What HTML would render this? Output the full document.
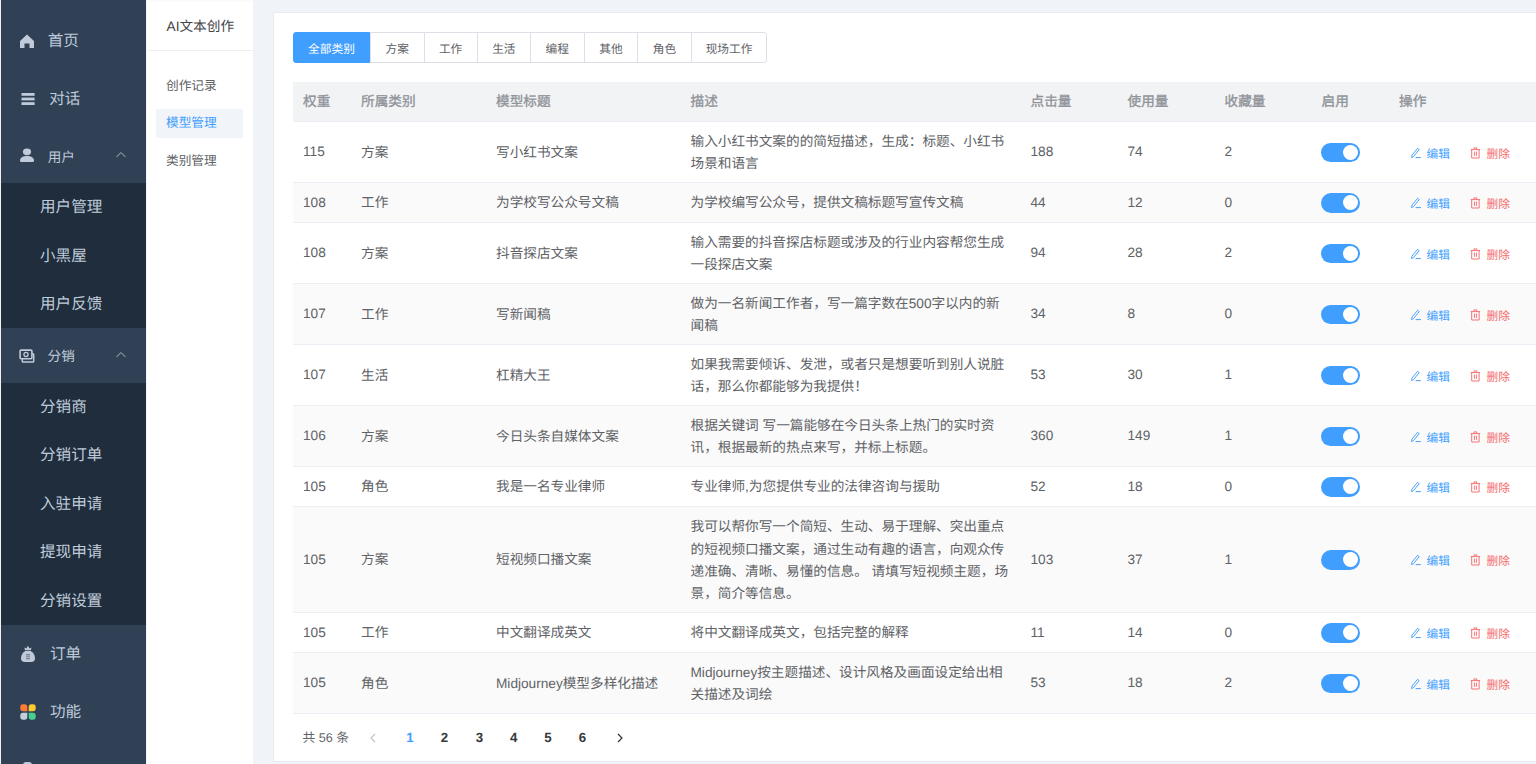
<!DOCTYPE html><html lang="zh-CN"><head><meta charset="utf-8"><style>
*{margin:0;padding:0;box-sizing:border-box}
html,body{width:1536px;height:764px;overflow:hidden;background:#f0f3f7;font-family:"Liberation Sans",sans-serif;color:#606266;text-rendering:geometricPrecision}
.t{position:absolute;white-space:nowrap;line-height:20px;height:20px}
#sb{position:absolute;left:0;top:0;width:146.3px;height:764px;background:#304156;border-left:1px solid #f1f0ee}
.sub{position:absolute;left:0;width:145.3px;background:#1f2d3d}
.mi{position:absolute;color:#bfcbd9;white-space:nowrap;line-height:20px;height:20px;font-size:15.6px}
.ic{position:absolute}
#p2{position:absolute;left:146.5px;top:0;width:106.5px;height:764px;background:#fff}
#card{position:absolute;left:272.5px;top:12px;width:1300px;height:750px;background:#fff;border:1px solid #e9ebee}
.btn{position:absolute;top:32px;height:30.5px;border:1px solid #dcdfe6;background:#fff;color:#606266;font-size:11.7px;line-height:28.5px;padding-top:2.5px;text-align:center;white-space:nowrap}
.row{position:absolute;left:293px;width:1300px;border-bottom:1px solid #ebeef5;background:#fff}
.row.s{background:#fafafa}
.c{position:absolute;top:0;bottom:1px;display:flex;align-items:center;white-space:nowrap;font-size:13.65px;line-height:22.3px}
.hd{background:#f2f3f5;color:#909399}
.hd .c{-webkit-text-stroke:0.35px #909399}
.sw{position:absolute;width:39px;height:19.6px;border-radius:10px;background:#409eff;top:50%;margin-top:-9.5px}
.sw::after{content:"";position:absolute;right:1.9px;top:2.2px;width:15.3px;height:15.3px;border-radius:50%;background:#fff}
.op{position:absolute;font-size:11.7px;white-space:nowrap;line-height:14px;height:14px;top:50%;margin-top:-6.5px}
.op span{position:relative;top:2px}
</style></head><body>
<div id="sb">
<div class="sub" style="top:182.5px;height:145.5px"></div>
<div class="sub" style="top:382.5px;height:242.5px"></div>
<div class="mi" style="left:46.7px;top:31.5px;font-size:15.6px">首页</div>
<div class="mi" style="left:48.2px;top:89.5px;font-size:15.6px">对话</div>
<div class="mi" style="left:46.7px;top:147.7px;font-size:13.65px">用户</div>
<div class="mi" style="left:39px;top:197.5px;font-size:15.6px">用户管理</div>
<div class="mi" style="left:39px;top:246.5px;font-size:15.6px">小黑屋</div>
<div class="mi" style="left:39px;top:294.7px;font-size:15.6px">用户反馈</div>
<div class="mi" style="left:46.6px;top:347px;font-size:13.65px">分销</div>
<div class="mi" style="left:39px;top:397.5px;font-size:15.6px">分销商</div>
<div class="mi" style="left:39px;top:446px;font-size:15.6px">分销订单</div>
<div class="mi" style="left:39px;top:494.5px;font-size:15.6px">入驻申请</div>
<div class="mi" style="left:39px;top:543px;font-size:15.6px">提现申请</div>
<div class="mi" style="left:39px;top:592px;font-size:15.6px">分销设置</div>
<div class="mi" style="left:49px;top:644.5px;font-size:15.6px">订单</div>
<div class="mi" style="left:49px;top:703px;font-size:15.6px">功能</div>
<svg class="ic" style="left:18px;top:32.7px" width="16" height="16" viewBox="0 0 16 16"><path d="M8 1.5 L15 8 V15 H10.5 V10.5 H5.5 V15 H1 V8 Z" fill="#c0cad8"/></svg>
<svg class="ic" style="left:20px;top:92px" width="14" height="14" viewBox="0 0 14 14"><rect x="0.5" y="1" width="13.1" height="2.8" fill="#c0cad8"/><rect x="0.5" y="5.6" width="13.1" height="2.8" fill="#c0cad8"/><rect x="0.5" y="10.2" width="13.1" height="2.8" fill="#c0cad8"/></svg>
<svg class="ic" style="left:18px;top:146px" width="16" height="18" viewBox="0 0 16 18"><ellipse cx="8" cy="5.8" rx="4.1" ry="3.4" fill="#c0cad8"/><path d="M1 14.6 C1 11.4 4.5 10.1 8 10.1 C11.5 10.1 15 11.4 15 14.6 C15 15.7 14.4 16.1 13.3 16.1 H2.7 C1.6 16.1 1 15.7 1 14.6 Z" fill="#c0cad8"/></svg>
<svg class="ic" style="left:114px;top:150.5px" width="12" height="8" viewBox="0 0 12 8"><path d="M1.5 6 L6 1.5 L10.5 6" fill="none" stroke="#7b8796" stroke-width="1.1"/></svg>
<svg class="ic" style="left:114px;top:350.5px" width="12" height="8" viewBox="0 0 12 8"><path d="M1.5 6 L6 1.5 L10.5 6" fill="none" stroke="#7b8796" stroke-width="1.1"/></svg>
<svg class="ic" style="left:17px;top:347px" width="18" height="17" viewBox="0 0 18 17"><rect x="4.3" y="6.8" width="11.4" height="8.3" rx="0.8" fill="#304156" stroke="#c0cad8" stroke-width="1.5"/><rect x="2.1" y="3.1" width="11.8" height="8.7" rx="1" fill="#304156" stroke="#c0cad8" stroke-width="1.6"/><circle cx="8" cy="7.5" r="2.05" fill="none" stroke="#c0cad8" stroke-width="1.3"/></svg>
<svg class="ic" style="left:20px;top:645px" width="15" height="18" viewBox="0 0 15 18"><path d="M4 5.3 L3.3 2.6 L5.3 3.4 L6.9 0.8 L8.5 3.4 L10.5 2.6 L9.8 5.3 Z" fill="#c0cad8"/><path d="M4.4 6.1 H9.6 C12.3 7.6 14 10.2 14 13.3 C14 16 12.6 17 10.3 17 H3.7 C1.4 17 0 16 0 13.3 C0 10.2 1.7 7.6 4.4 6.1 Z" fill="#c0cad8"/><rect x="5" y="9" width="4" height="5.3" fill="#304156" opacity="0.5"/><path d="M5 10.8 H9 M5 12.5 H9" stroke="#c0cad8" stroke-width="0.7"/></svg>
<svg class="ic" style="left:18.7px;top:704.3px" width="16" height="16" viewBox="0 0 16 16"><path d="M7.3 7.3 H3 A2.7 2.7 0 0 1 0.3 4.6 V3 A2.7 2.7 0 0 1 3 0.3 H4.6 A2.7 2.7 0 0 1 7.3 3 Z" fill="#fe7b35"/><path d="M8.7 7.3 H13 A2.7 2.7 0 0 0 15.7 4.6 V3 A2.7 2.7 0 0 0 13 0.3 H11.4 A2.7 2.7 0 0 0 8.7 3 Z" fill="#fdcb30"/><path d="M7.3 8.7 H3 A2.7 2.7 0 0 0 0.3 11.4 V13 A2.7 2.7 0 0 0 3 15.7 H4.6 A2.7 2.7 0 0 0 7.3 13 Z" fill="#c5cfdc"/><path d="M8.7 8.7 H13 A2.7 2.7 0 0 1 15.7 11.4 V13 A2.7 2.7 0 0 1 13 15.7 H11.4 A2.7 2.7 0 0 1 8.7 13 Z" fill="#45d08f"/></svg>
<div style="position:absolute;left:21.5px;top:761.5px;width:9.5px;height:3px;background:#c0cad8;border-radius:3px 3px 0 0"></div>
</div>
<div id="p2">
<div style="position:absolute;left:0;top:0;width:106.5px;height:1.5px;background:#fbfbfb"></div>
<div class="t" style="left:20.099999999999994px;top:16.5px;font-size:13.65px;color:#434448">AI文本创作</div>
<div style="position:absolute;left:1.5px;top:49.5px;width:105px;height:1.4px;background:#efefef"></div>
<div class="t" style="left:19.5px;top:76px;font-size:12.7px;color:#606266">创作记录</div>
<div style="position:absolute;left:9.5px;top:109px;width:87.3px;height:29px;background:#f1f4f8"></div>
<div class="t" style="left:19.5px;top:112.7px;font-size:12.7px;color:#409eff">模型管理</div>
<div class="t" style="left:19.5px;top:151px;font-size:12.7px;color:#606266">类别管理</div>
</div>
<div id="card"></div>
<div class="btn" style="left:293px;width:77px;background:#409eff;border-color:#409eff;color:#fff;border-radius:3px 0 0 3px">全部类别</div>
<div class="btn" style="left:370px;width:54.5px">方案</div>
<div class="btn" style="left:423.5px;width:54.19999999999999px">工作</div>
<div class="btn" style="left:476.7px;width:54.30000000000001px">生活</div>
<div class="btn" style="left:530px;width:54.60000000000002px">编程</div>
<div class="btn" style="left:583.6px;width:54.69999999999993px">其他</div>
<div class="btn" style="left:637.3px;width:54.40000000000009px">角色</div>
<div class="btn" style="left:690.7px;width:76.69999999999993px;border-radius:0 3px 3px 0">现场工作</div>
<div class="row hd" style="top:82px;height:40px"><div class="c" style="left:10px;top:1.2px;bottom:-0.19999999999999996px;">权重</div><div class="c" style="left:68px;top:1.2px;bottom:-0.19999999999999996px;">所属类别</div><div class="c" style="left:203px;top:1.2px;bottom:-0.19999999999999996px;">模型标题</div><div class="c" style="left:397.5px;top:1.2px;bottom:-0.19999999999999996px;">描述</div><div class="c" style="left:737.5px;top:1.2px;bottom:-0.19999999999999996px;">点击量</div><div class="c" style="left:834.5px;top:1.2px;bottom:-0.19999999999999996px;">使用量</div><div class="c" style="left:931.5px;top:1.2px;bottom:-0.19999999999999996px;">收藏量</div><div class="c" style="left:1028.5px;top:1.2px;bottom:-0.19999999999999996px;">启用</div><div class="c" style="left:1106px;top:1.2px;bottom:-0.19999999999999996px;">操作</div></div>
<div class="row" style="top:122px;height:61px"><div class="c" style="left:10px;top:1.0px;bottom:0.0px;">115</div><div class="c" style="left:68px;top:1.2px;bottom:-0.19999999999999996px;">方案</div><div class="c" style="left:203px;top:1.2px;bottom:-0.19999999999999996px;">写小红书文案</div><div class="c" style="left:397.5px;top:1.9px;bottom:-0.8999999999999999px;"><div>输入小红书文案的的简短描述，生成：标题、小红书<br>场景和语言</div></div><div class="c" style="left:737.5px;top:1.0px;bottom:0.0px;">188</div><div class="c" style="left:834.5px;top:1.0px;bottom:0.0px;">74</div><div class="c" style="left:931.5px;top:1.0px;bottom:0.0px;">2</div><div class="sw" style="left:1028.25px"></div><div class="op" style="left:1117px;color:#409eff;padding-left:16.6px"><svg width="12" height="12" viewBox="0 0 12 12" style="position:absolute;left:0;top:1.1px"><path d="M1.6 10.6 L1.9 8.2 L7.6 1.3 L9.2 2.6 L3.5 9.6 Z" fill="none" stroke="#409eff" stroke-width="0.95" stroke-linejoin="round"/><path d="M5.6 10.6 H10.8" stroke="#409eff" stroke-width="1"/></svg><span>编辑</span></div><div class="op" style="left:1177.3px;color:#f56c6c;padding-left:16.2px"><svg width="11" height="12" viewBox="0 0 11 12" style="position:absolute;left:0;top:1.2px"><path d="M4 2.4 V0.9 H6.8 V2.4 M0.7 2.6 H10.1 M1.7 2.6 V11 H9.1 V2.6 M4.4 4.6 V8.8 M6.4 4.6 V8.8" fill="none" stroke="#f56c6c" stroke-width="0.95"/></svg><span>删除</span></div></div>
<div class="row s" style="top:183px;height:40px"><div class="c" style="left:10px;top:1.0px;bottom:0.0px;">108</div><div class="c" style="left:68px;top:1.2px;bottom:-0.19999999999999996px;">工作</div><div class="c" style="left:203px;top:1.2px;bottom:-0.19999999999999996px;">为学校写公众号文稿</div><div class="c" style="left:397.5px;top:1.2px;bottom:-0.19999999999999996px;"><div>为学校编写公众号，提供文稿标题写宣传文稿</div></div><div class="c" style="left:737.5px;top:1.0px;bottom:0.0px;">44</div><div class="c" style="left:834.5px;top:1.0px;bottom:0.0px;">12</div><div class="c" style="left:931.5px;top:1.0px;bottom:0.0px;">0</div><div class="sw" style="left:1028.25px"></div><div class="op" style="left:1117px;color:#409eff;padding-left:16.6px"><svg width="12" height="12" viewBox="0 0 12 12" style="position:absolute;left:0;top:1.1px"><path d="M1.6 10.6 L1.9 8.2 L7.6 1.3 L9.2 2.6 L3.5 9.6 Z" fill="none" stroke="#409eff" stroke-width="0.95" stroke-linejoin="round"/><path d="M5.6 10.6 H10.8" stroke="#409eff" stroke-width="1"/></svg><span>编辑</span></div><div class="op" style="left:1177.3px;color:#f56c6c;padding-left:16.2px"><svg width="11" height="12" viewBox="0 0 11 12" style="position:absolute;left:0;top:1.2px"><path d="M4 2.4 V0.9 H6.8 V2.4 M0.7 2.6 H10.1 M1.7 2.6 V11 H9.1 V2.6 M4.4 4.6 V8.8 M6.4 4.6 V8.8" fill="none" stroke="#f56c6c" stroke-width="0.95"/></svg><span>删除</span></div></div>
<div class="row" style="top:223px;height:61px"><div class="c" style="left:10px;top:1.0px;bottom:0.0px;">108</div><div class="c" style="left:68px;top:1.2px;bottom:-0.19999999999999996px;">方案</div><div class="c" style="left:203px;top:1.2px;bottom:-0.19999999999999996px;">抖音探店文案</div><div class="c" style="left:397.5px;top:1.9px;bottom:-0.8999999999999999px;"><div>输入需要的抖音探店标题或涉及的行业内容帮您生成<br>一段探店文案</div></div><div class="c" style="left:737.5px;top:1.0px;bottom:0.0px;">94</div><div class="c" style="left:834.5px;top:1.0px;bottom:0.0px;">28</div><div class="c" style="left:931.5px;top:1.0px;bottom:0.0px;">2</div><div class="sw" style="left:1028.25px"></div><div class="op" style="left:1117px;color:#409eff;padding-left:16.6px"><svg width="12" height="12" viewBox="0 0 12 12" style="position:absolute;left:0;top:1.1px"><path d="M1.6 10.6 L1.9 8.2 L7.6 1.3 L9.2 2.6 L3.5 9.6 Z" fill="none" stroke="#409eff" stroke-width="0.95" stroke-linejoin="round"/><path d="M5.6 10.6 H10.8" stroke="#409eff" stroke-width="1"/></svg><span>编辑</span></div><div class="op" style="left:1177.3px;color:#f56c6c;padding-left:16.2px"><svg width="11" height="12" viewBox="0 0 11 12" style="position:absolute;left:0;top:1.2px"><path d="M4 2.4 V0.9 H6.8 V2.4 M0.7 2.6 H10.1 M1.7 2.6 V11 H9.1 V2.6 M4.4 4.6 V8.8 M6.4 4.6 V8.8" fill="none" stroke="#f56c6c" stroke-width="0.95"/></svg><span>删除</span></div></div>
<div class="row s" style="top:284px;height:61px"><div class="c" style="left:10px;top:1.0px;bottom:0.0px;">107</div><div class="c" style="left:68px;top:1.2px;bottom:-0.19999999999999996px;">工作</div><div class="c" style="left:203px;top:1.2px;bottom:-0.19999999999999996px;">写新闻稿</div><div class="c" style="left:397.5px;top:1.9px;bottom:-0.8999999999999999px;"><div>做为一名新闻工作者，写一篇字数在500字以内的新<br>闻稿</div></div><div class="c" style="left:737.5px;top:1.0px;bottom:0.0px;">34</div><div class="c" style="left:834.5px;top:1.0px;bottom:0.0px;">8</div><div class="c" style="left:931.5px;top:1.0px;bottom:0.0px;">0</div><div class="sw" style="left:1028.25px"></div><div class="op" style="left:1117px;color:#409eff;padding-left:16.6px"><svg width="12" height="12" viewBox="0 0 12 12" style="position:absolute;left:0;top:1.1px"><path d="M1.6 10.6 L1.9 8.2 L7.6 1.3 L9.2 2.6 L3.5 9.6 Z" fill="none" stroke="#409eff" stroke-width="0.95" stroke-linejoin="round"/><path d="M5.6 10.6 H10.8" stroke="#409eff" stroke-width="1"/></svg><span>编辑</span></div><div class="op" style="left:1177.3px;color:#f56c6c;padding-left:16.2px"><svg width="11" height="12" viewBox="0 0 11 12" style="position:absolute;left:0;top:1.2px"><path d="M4 2.4 V0.9 H6.8 V2.4 M0.7 2.6 H10.1 M1.7 2.6 V11 H9.1 V2.6 M4.4 4.6 V8.8 M6.4 4.6 V8.8" fill="none" stroke="#f56c6c" stroke-width="0.95"/></svg><span>删除</span></div></div>
<div class="row" style="top:345px;height:61px"><div class="c" style="left:10px;top:1.0px;bottom:0.0px;">107</div><div class="c" style="left:68px;top:1.2px;bottom:-0.19999999999999996px;">生活</div><div class="c" style="left:203px;top:1.2px;bottom:-0.19999999999999996px;">杠精大王</div><div class="c" style="left:397.5px;top:1.9px;bottom:-0.8999999999999999px;"><div>如果我需要倾诉、发泄，或者只是想要听到别人说脏<br>话，那么你都能够为我提供！</div></div><div class="c" style="left:737.5px;top:1.0px;bottom:0.0px;">53</div><div class="c" style="left:834.5px;top:1.0px;bottom:0.0px;">30</div><div class="c" style="left:931.5px;top:1.0px;bottom:0.0px;">1</div><div class="sw" style="left:1028.25px"></div><div class="op" style="left:1117px;color:#409eff;padding-left:16.6px"><svg width="12" height="12" viewBox="0 0 12 12" style="position:absolute;left:0;top:1.1px"><path d="M1.6 10.6 L1.9 8.2 L7.6 1.3 L9.2 2.6 L3.5 9.6 Z" fill="none" stroke="#409eff" stroke-width="0.95" stroke-linejoin="round"/><path d="M5.6 10.6 H10.8" stroke="#409eff" stroke-width="1"/></svg><span>编辑</span></div><div class="op" style="left:1177.3px;color:#f56c6c;padding-left:16.2px"><svg width="11" height="12" viewBox="0 0 11 12" style="position:absolute;left:0;top:1.2px"><path d="M4 2.4 V0.9 H6.8 V2.4 M0.7 2.6 H10.1 M1.7 2.6 V11 H9.1 V2.6 M4.4 4.6 V8.8 M6.4 4.6 V8.8" fill="none" stroke="#f56c6c" stroke-width="0.95"/></svg><span>删除</span></div></div>
<div class="row s" style="top:406px;height:61px"><div class="c" style="left:10px;top:1.0px;bottom:0.0px;">106</div><div class="c" style="left:68px;top:1.2px;bottom:-0.19999999999999996px;">方案</div><div class="c" style="left:203px;top:1.2px;bottom:-0.19999999999999996px;">今日头条自媒体文案</div><div class="c" style="left:397.5px;top:1.9px;bottom:-0.8999999999999999px;"><div>根据关键词 写一篇能够在今日头条上热门的实时资<br>讯，根据最新的热点来写，并标上标题。</div></div><div class="c" style="left:737.5px;top:1.0px;bottom:0.0px;">360</div><div class="c" style="left:834.5px;top:1.0px;bottom:0.0px;">149</div><div class="c" style="left:931.5px;top:1.0px;bottom:0.0px;">1</div><div class="sw" style="left:1028.25px"></div><div class="op" style="left:1117px;color:#409eff;padding-left:16.6px"><svg width="12" height="12" viewBox="0 0 12 12" style="position:absolute;left:0;top:1.1px"><path d="M1.6 10.6 L1.9 8.2 L7.6 1.3 L9.2 2.6 L3.5 9.6 Z" fill="none" stroke="#409eff" stroke-width="0.95" stroke-linejoin="round"/><path d="M5.6 10.6 H10.8" stroke="#409eff" stroke-width="1"/></svg><span>编辑</span></div><div class="op" style="left:1177.3px;color:#f56c6c;padding-left:16.2px"><svg width="11" height="12" viewBox="0 0 11 12" style="position:absolute;left:0;top:1.2px"><path d="M4 2.4 V0.9 H6.8 V2.4 M0.7 2.6 H10.1 M1.7 2.6 V11 H9.1 V2.6 M4.4 4.6 V8.8 M6.4 4.6 V8.8" fill="none" stroke="#f56c6c" stroke-width="0.95"/></svg><span>删除</span></div></div>
<div class="row" style="top:467px;height:40px"><div class="c" style="left:10px;top:1.0px;bottom:0.0px;">105</div><div class="c" style="left:68px;top:1.2px;bottom:-0.19999999999999996px;">角色</div><div class="c" style="left:203px;top:1.2px;bottom:-0.19999999999999996px;">我是一名专业律师</div><div class="c" style="left:397.5px;top:1.2px;bottom:-0.19999999999999996px;"><div>专业律师,为您提供专业的法律咨询与援助</div></div><div class="c" style="left:737.5px;top:1.0px;bottom:0.0px;">52</div><div class="c" style="left:834.5px;top:1.0px;bottom:0.0px;">18</div><div class="c" style="left:931.5px;top:1.0px;bottom:0.0px;">0</div><div class="sw" style="left:1028.25px"></div><div class="op" style="left:1117px;color:#409eff;padding-left:16.6px"><svg width="12" height="12" viewBox="0 0 12 12" style="position:absolute;left:0;top:1.1px"><path d="M1.6 10.6 L1.9 8.2 L7.6 1.3 L9.2 2.6 L3.5 9.6 Z" fill="none" stroke="#409eff" stroke-width="0.95" stroke-linejoin="round"/><path d="M5.6 10.6 H10.8" stroke="#409eff" stroke-width="1"/></svg><span>编辑</span></div><div class="op" style="left:1177.3px;color:#f56c6c;padding-left:16.2px"><svg width="11" height="12" viewBox="0 0 11 12" style="position:absolute;left:0;top:1.2px"><path d="M4 2.4 V0.9 H6.8 V2.4 M0.7 2.6 H10.1 M1.7 2.6 V11 H9.1 V2.6 M4.4 4.6 V8.8 M6.4 4.6 V8.8" fill="none" stroke="#f56c6c" stroke-width="0.95"/></svg><span>删除</span></div></div>
<div class="row s" style="top:507px;height:106px"><div class="c" style="left:10px;top:1.0px;bottom:0.0px;">105</div><div class="c" style="left:68px;top:1.2px;bottom:-0.19999999999999996px;">方案</div><div class="c" style="left:203px;top:1.2px;bottom:-0.19999999999999996px;">短视频口播文案</div><div class="c" style="left:397.5px;top:1.9px;bottom:-0.8999999999999999px;"><div>我可以帮你写一个简短、生动、易于理解、突出重点<br>的短视频口播文案，通过生动有趣的语言，向观众传<br>递准确、清晰、易懂的信息。 请填写短视频主题，场<br>景，简介等信息。</div></div><div class="c" style="left:737.5px;top:1.0px;bottom:0.0px;">103</div><div class="c" style="left:834.5px;top:1.0px;bottom:0.0px;">37</div><div class="c" style="left:931.5px;top:1.0px;bottom:0.0px;">1</div><div class="sw" style="left:1028.25px"></div><div class="op" style="left:1117px;color:#409eff;padding-left:16.6px"><svg width="12" height="12" viewBox="0 0 12 12" style="position:absolute;left:0;top:1.1px"><path d="M1.6 10.6 L1.9 8.2 L7.6 1.3 L9.2 2.6 L3.5 9.6 Z" fill="none" stroke="#409eff" stroke-width="0.95" stroke-linejoin="round"/><path d="M5.6 10.6 H10.8" stroke="#409eff" stroke-width="1"/></svg><span>编辑</span></div><div class="op" style="left:1177.3px;color:#f56c6c;padding-left:16.2px"><svg width="11" height="12" viewBox="0 0 11 12" style="position:absolute;left:0;top:1.2px"><path d="M4 2.4 V0.9 H6.8 V2.4 M0.7 2.6 H10.1 M1.7 2.6 V11 H9.1 V2.6 M4.4 4.6 V8.8 M6.4 4.6 V8.8" fill="none" stroke="#f56c6c" stroke-width="0.95"/></svg><span>删除</span></div></div>
<div class="row" style="top:613px;height:40px"><div class="c" style="left:10px;top:1.0px;bottom:0.0px;">105</div><div class="c" style="left:68px;top:1.2px;bottom:-0.19999999999999996px;">工作</div><div class="c" style="left:203px;top:1.2px;bottom:-0.19999999999999996px;">中文翻译成英文</div><div class="c" style="left:397.5px;top:1.2px;bottom:-0.19999999999999996px;"><div>将中文翻译成英文，包括完整的解释</div></div><div class="c" style="left:737.5px;top:1.0px;bottom:0.0px;">11</div><div class="c" style="left:834.5px;top:1.0px;bottom:0.0px;">14</div><div class="c" style="left:931.5px;top:1.0px;bottom:0.0px;">0</div><div class="sw" style="left:1028.25px"></div><div class="op" style="left:1117px;color:#409eff;padding-left:16.6px"><svg width="12" height="12" viewBox="0 0 12 12" style="position:absolute;left:0;top:1.1px"><path d="M1.6 10.6 L1.9 8.2 L7.6 1.3 L9.2 2.6 L3.5 9.6 Z" fill="none" stroke="#409eff" stroke-width="0.95" stroke-linejoin="round"/><path d="M5.6 10.6 H10.8" stroke="#409eff" stroke-width="1"/></svg><span>编辑</span></div><div class="op" style="left:1177.3px;color:#f56c6c;padding-left:16.2px"><svg width="11" height="12" viewBox="0 0 11 12" style="position:absolute;left:0;top:1.2px"><path d="M4 2.4 V0.9 H6.8 V2.4 M0.7 2.6 H10.1 M1.7 2.6 V11 H9.1 V2.6 M4.4 4.6 V8.8 M6.4 4.6 V8.8" fill="none" stroke="#f56c6c" stroke-width="0.95"/></svg><span>删除</span></div></div>
<div class="row s" style="top:653px;height:61px"><div class="c" style="left:10px;top:1.0px;bottom:0.0px;">105</div><div class="c" style="left:68px;top:1.2px;bottom:-0.19999999999999996px;">角色</div><div class="c" style="left:203px;top:1.2px;bottom:-0.19999999999999996px;">Midjourney模型多样化描述</div><div class="c" style="left:397.5px;top:1.9px;bottom:-0.8999999999999999px;"><div>Midjourney按主题描述、设计风格及画面设定给出相<br>关描述及词绘</div></div><div class="c" style="left:737.5px;top:1.0px;bottom:0.0px;">53</div><div class="c" style="left:834.5px;top:1.0px;bottom:0.0px;">18</div><div class="c" style="left:931.5px;top:1.0px;bottom:0.0px;">2</div><div class="sw" style="left:1028.25px"></div><div class="op" style="left:1117px;color:#409eff;padding-left:16.6px"><svg width="12" height="12" viewBox="0 0 12 12" style="position:absolute;left:0;top:1.1px"><path d="M1.6 10.6 L1.9 8.2 L7.6 1.3 L9.2 2.6 L3.5 9.6 Z" fill="none" stroke="#409eff" stroke-width="0.95" stroke-linejoin="round"/><path d="M5.6 10.6 H10.8" stroke="#409eff" stroke-width="1"/></svg><span>编辑</span></div><div class="op" style="left:1177.3px;color:#f56c6c;padding-left:16.2px"><svg width="11" height="12" viewBox="0 0 11 12" style="position:absolute;left:0;top:1.2px"><path d="M4 2.4 V0.9 H6.8 V2.4 M0.7 2.6 H10.1 M1.7 2.6 V11 H9.1 V2.6 M4.4 4.6 V8.8 M6.4 4.6 V8.8" fill="none" stroke="#f56c6c" stroke-width="0.95"/></svg><span>删除</span></div></div>
<div class="t" style="left:302.5px;top:727.5px;font-size:12.7px;color:#606266">共 56 条</div>
<svg style="position:absolute;left:369px;top:733px" width="8" height="10" viewBox="0 0 8 10"><path d="M6 1 L2 5 L6 9" fill="none" stroke="#c0c4cc" stroke-width="1.2"/></svg>
<div class="t" style="left:400px;width:20px;text-align:center;top:728px;font-size:13.3px;font-weight:bold;color:#409eff">1</div>
<div class="t" style="left:434.5px;width:20px;text-align:center;top:728px;font-size:13.3px;font-weight:bold;color:#38393c">2</div>
<div class="t" style="left:469.5px;width:20px;text-align:center;top:728px;font-size:13.3px;font-weight:bold;color:#38393c">3</div>
<div class="t" style="left:503.75px;width:20px;text-align:center;top:728px;font-size:13.3px;font-weight:bold;color:#38393c">4</div>
<div class="t" style="left:538px;width:20px;text-align:center;top:728px;font-size:13.3px;font-weight:bold;color:#38393c">5</div>
<div class="t" style="left:572.5px;width:20px;text-align:center;top:728px;font-size:13.3px;font-weight:bold;color:#38393c">6</div>
<svg style="position:absolute;left:616px;top:733px" width="8" height="10" viewBox="0 0 8 10"><path d="M2 1 L6 5 L2 9" fill="none" stroke="#303133" stroke-width="1.2"/></svg>
</body></html>
